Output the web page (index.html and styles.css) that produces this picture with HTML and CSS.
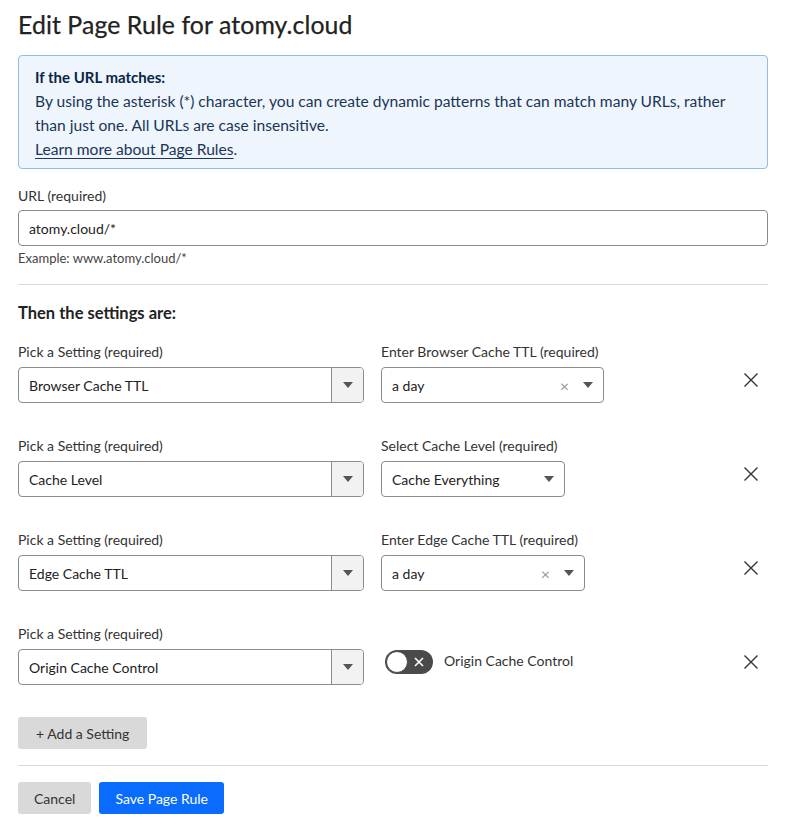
FILE: index.html
```html
<!DOCTYPE html>
<html lang="en">
<head>
<meta charset="utf-8">
<title>Edit Page Rule</title>
<link rel="stylesheet" href="styles.css">
</head>
<body>
<div class="page">
  <h1 class="title">Edit Page Rule for atomy.cloud</h1>

  <div class="info">
    <div class="info-head">If the URL matches:</div>
    <p class="info-text">By using the asterisk (*) character, you can create dynamic patterns that can match many URLs, rather than just one. All URLs are case insensitive.</p>
    <a class="info-link" href="#">Learn more about Page Rules</a>.
  </div>

  <label class="label url-label">URL (required)</label>
  <div class="input">atomy.cloud/*</div>
  <div class="hint">Example: www.atomy.cloud/*</div>

  <hr class="divider">

  <div class="section-head">Then the settings are:</div>

  <div class="rows">
    <div class="row">
      <div class="col">
        <div class="label">Pick a Setting (required)</div>
        <div class="select wide"><span class="select-value">Browser Cache TTL</span><span class="select-btn"><span class="caret"></span></span></div>
      </div>
      <div class="col">
        <div class="label">Enter Browser Cache TTL (required)</div>
        <div class="select combo w223"><span class="select-value">a day</span><span class="clear">×</span><span class="caret"></span></div>
      </div>
      <button class="remove" aria-label="Remove"><svg width="16" height="16" viewBox="0 0 16 16"><path d="M1.5 1.5 14.5 14.5M14.5 1.5 1.5 14.5" stroke="#333" stroke-width="1.4" fill="none"/></svg></button>
    </div>

    <div class="row">
      <div class="col">
        <div class="label">Pick a Setting (required)</div>
        <div class="select wide"><span class="select-value">Cache Level</span><span class="select-btn"><span class="caret"></span></span></div>
      </div>
      <div class="col">
        <div class="label">Select Cache Level (required)</div>
        <div class="select combo w184"><span class="select-value">Cache Everything</span><span class="caret"></span></div>
      </div>
      <button class="remove" aria-label="Remove"><svg width="16" height="16" viewBox="0 0 16 16"><path d="M1.5 1.5 14.5 14.5M14.5 1.5 1.5 14.5" stroke="#333" stroke-width="1.4" fill="none"/></svg></button>
    </div>

    <div class="row">
      <div class="col">
        <div class="label">Pick a Setting (required)</div>
        <div class="select wide"><span class="select-value">Edge Cache TTL</span><span class="select-btn"><span class="caret"></span></span></div>
      </div>
      <div class="col">
        <div class="label">Enter Edge Cache TTL (required)</div>
        <div class="select combo w204"><span class="select-value">a day</span><span class="clear">×</span><span class="caret"></span></div>
      </div>
      <button class="remove" aria-label="Remove"><svg width="16" height="16" viewBox="0 0 16 16"><path d="M1.5 1.5 14.5 14.5M14.5 1.5 1.5 14.5" stroke="#333" stroke-width="1.4" fill="none"/></svg></button>
    </div>

    <div class="row">
      <div class="col">
        <div class="label">Pick a Setting (required)</div>
        <div class="select wide"><span class="select-value">Origin Cache Control</span><span class="select-btn"><span class="caret"></span></span></div>
      </div>
      <div class="col toggle-col">
        <div class="toggle-wrap">
          <span class="toggle"><span class="knob"></span><svg class="toggle-x" width="10" height="10" viewBox="0 0 10 10"><path d="M1 1 9 9M9 1 1 9" stroke="#fff" stroke-width="1.6" fill="none"/></svg></span>
          <span class="toggle-label">Origin Cache Control</span>
        </div>
      </div>
      <button class="remove" aria-label="Remove"><svg width="16" height="16" viewBox="0 0 16 16"><path d="M1.5 1.5 14.5 14.5M14.5 1.5 1.5 14.5" stroke="#333" stroke-width="1.4" fill="none"/></svg></button>
    </div>
  </div>

  <button class="btn btn-gray add">+ Add a Setting</button>

  <hr class="divider bottom">

  <div class="actions">
    <button class="btn btn-gray">Cancel</button>
    <button class="btn btn-blue">Save Page Rule</button>
  </div>
</div>
</body>
</html>
```

FILE: styles.css
```css
* { box-sizing: border-box; }

body {
  margin: 0;
  background: #fff;
  font-family: "Lato", "Noto Sans", "Liberation Sans", sans-serif;
  color: #333;
}

.page {
  padding: 0 18px;
  width: 786px;
}

.title {
  margin: 0;
  padding-top: 9px;
  font-size: 24.8px;
  line-height: 32px;
  font-weight: 400;
  color: #222;
  letter-spacing: 0.1px;
  -webkit-text-stroke: 0.25px #222;
}

.info {
  margin-top: 14px;
  background: #eef5fd;
  border: 1px solid #92bde6;
  border-radius: 4px;
  padding: 9px 16px 7px;
  font-size: 15.6px;
  line-height: 24px;
  color: #1c3556;
}

.info-head {
  font-weight: 700;
  font-size: 15px;
  color: #0b2545;
}

.info-text { margin: 0; }

.info-link {
  color: #1c3556;
  text-decoration: underline;
  text-underline-offset: 3px;
}

.label {
  display: block;
  font-size: 14px;
  line-height: 18px;
  color: #333;
}

.url-label { margin-top: 18px; }

.input {
  margin-top: 5px;
  height: 36px;
  border: 1px solid #8c8c8c;
  border-radius: 4px;
  padding: 0 10px;
  display: flex;
  align-items: center;
  font-size: 14px;
  color: #222;
}

.hint {
  margin-top: 3px;
  font-size: 13px;
  line-height: 18px;
  color: #444;
}

.divider {
  margin: 17px 0 0;
  border: 0;
  border-top: 1px solid #d9d9d9;
}

.section-head {
  margin-top: 18px;
  font-size: 16.5px;
  line-height: 20px;
  font-weight: 700;
  color: #222;
}

.rows {
  margin-top: 20px;
  display: flex;
  flex-direction: column;
  gap: 34px;
}

.row {
  display: flex;
  align-items: flex-start;
  height: 60px;
}

.col {
  display: flex;
  flex-direction: column;
  gap: 6px;
}

.col + .col { margin-left: 17px; }

.select {
  height: 36px;
  border: 1px solid #8c8c8c;
  border-radius: 4px;
  display: flex;
  align-items: center;
  font-size: 14px;
  color: #222;
  overflow: hidden;
}

.select-value {
  flex: 1;
  padding-left: 10px;
}

.wide { width: 346px; }
.w223 { width: 223px; }
.w184 { width: 184px; }
.w204 { width: 204px; }

.select-btn {
  width: 32px;
  height: 100%;
  background: #f2f2f2;
  border-left: 1px solid #8c8c8c;
  display: flex;
  align-items: center;
  justify-content: center;
}

.caret {
  width: 0;
  height: 0;
  border-left: 5px solid transparent;
  border-right: 5px solid transparent;
  border-top: 6px solid #555;
}

.combo .caret { margin-right: 10px; }

.clear {
  color: #999;
  font-size: 16px;
  margin-right: 14px;
}

.remove {
  margin-left: auto;
  margin-right: 1px;
  margin-top: 21px;
  width: 32px;
  height: 32px;
  border: 0;
  background: transparent;
  padding: 0;
  display: flex;
  align-items: center;
  justify-content: center;
}

.toggle-wrap {
  margin-top: 25px;
  margin-left: 4px;
  display: flex;
  align-items: center;
  gap: 11px;
}

.toggle {
  position: relative;
  width: 48px;
  height: 24px;
  border-radius: 12px;
  background: #4a4a4a;
  display: inline-flex;
  align-items: center;
}

.knob {
  position: absolute;
  left: 1px;
  top: 1px;
  width: 22px;
  height: 22px;
  border-radius: 50%;
  background: #fff;
  border: 1px solid #4a4a4a;
}

.toggle-x {
  position: absolute;
  right: 9px;
  top: 7px;
}

.toggle-label {
  font-size: 14px;
  color: #333;
  margin-top: -3px;
}

.btn {
  height: 32px;
  border: 0;
  border-radius: 3px;
  font-family: inherit;
  font-size: 14px;
  padding: 0 16px;
  cursor: pointer;
}

.btn-gray {
  background: #d9d9d9;
  color: #333;
}

.btn-blue {
  background: #0a6cff;
  color: #fff;
}

.add {
  margin-top: 32px;
  display: block;
  padding: 0 18px;
}

.divider.bottom { margin-top: 16px; }

.actions {
  margin-top: 16px;
  display: flex;
  gap: 8px;
}
```
